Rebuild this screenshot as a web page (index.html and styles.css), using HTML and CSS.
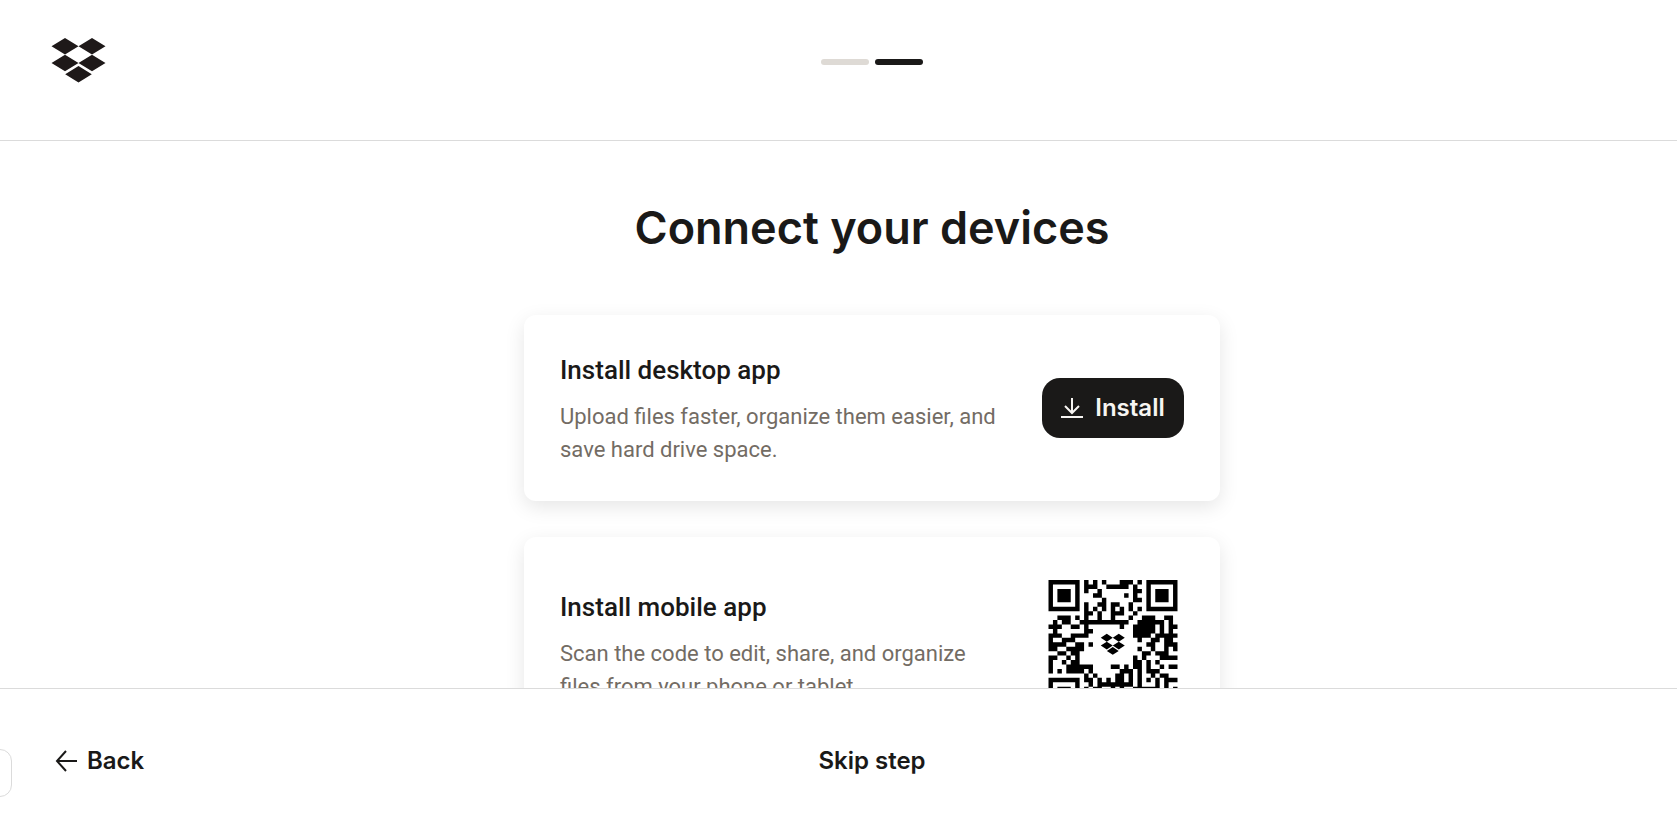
FILE: index.html
```html
<!DOCTYPE html>
<html lang="en">
    <head>
        <meta charset="utf-8">
        <title>Connect your devices</title>
        <meta name="viewport" content="width=device-width, initial-scale=1">
        <link rel="stylesheet" href="styles.css">
    </head>
    <body>
        <div class="page">
            <header class="top">
                <a class="logo" href="#" aria-label="Dropbox">
                    <svg viewBox="0 0 53 45">
                        <path id="glyph" d="M13 0l13.500 8.300-13.500 8.300L-.5 8.300zM40 0l13.500 8.300-13.500 8.300-13.500-8.300zM13 16.700l13.500 8.300-13.500 8.300L-.5 25zM40 16.700l13.500 8.300-13.500 8.300L26.500 25zM26.500 28l13.300 8.300-13.300 8.300-13.300-8.300z"/>
                    </svg>
                </a>
                <div class="steps">
                    <span class="step"></span>
                    <span class="step active"></span>
                </div>
            </header>

            <main class="content">
                <h1>Connect your devices</h1>
                <section class="card">
                    <div class="info">
                        <h2>Install desktop app</h2>
                        <p>Upload files faster, organize them easier, and save hard drive space.</p>
                    </div>
                    <button class="install" type="button">
                        <svg viewBox="0 0 22 22"><path d="M11 1v15M4 9l7 7 7-7M0 20h22"/></svg>
                        Install
                    </button>
                </section>
                <section class="card">
                    <div class="info">
                        <h2>Install mobile app</h2>
                        <p>Scan the code to edit, share, and organize files from your phone or tablet.</p>
                    </div>
                    <svg class="qr" viewBox="0 0 29 29" role="img" aria-label="QR code">
                        <path class="modules"/>
                        <use href="#glyph" transform="translate(11.8 12.1) scale(.1 .106)"/>
                    </svg>
                </section>
            </main>

            <footer class="bottom">
                <button class="link back" type="button">
                    <svg viewBox="0 0 22 22"><path d="M22 11H2M11 1L2 11l9 10"/></svg>
                    Back
                </button>
                <button class="link" type="button">Skip step</button>
            </footer>
        </div>
        <div class="tab"></div>
        <script src="qr.js"></script>
    </body>
</html>
```
FILE: styles.css
```css
* {
    box-sizing: border-box;
}

body {
    margin: 0;
    height: 100vh;
    overflow: hidden;
    color: #1a1918;
    background: #fff;
    font-family: Inter, "Liberation Sans", sans-serif;
}

/* wider than the window, runs out on the right */
.page {
    height: 100%;
    margin-right: -67px;
    display: flex;
    flex-direction: column;
}

.top,
.bottom {
    flex: none;
    display: grid;
    grid-template-columns: 1fr auto 1fr;
    padding: 0 52px;
}

.top {
    padding-top: 38px;
    padding-bottom: 57px;
    border-bottom: 1px solid #dbdbdb;
}

.logo svg {
    display: block;
    width: 53px;
    height: 45px;
    overflow: visible;
    fill: #1e1919;
}

.steps {
    display: flex;
    gap: 6px;
    padding-top: 21px;
}

.step {
    width: 48px;
    height: 6px;
    border-radius: 3px;
    background: #dedad5;
}

.step.active {
    background: #1a1918;
}

.content {
    flex: 1;
    min-height: 0;
    overflow: hidden;
    display: flex;
    flex-direction: column;
    align-items: center;
}

h1 {
    margin: 56px 0;
    font-size: 45px;
    line-height: 62px;
    font-weight: 600;
}

.card {
    flex: none;
    width: 100%;
    max-width: 696px;
    padding: 35px 36px;
    margin-bottom: 36px;
    display: flex;
    align-items: center;
    justify-content: space-between;
    gap: 36px;
    border-radius: 12px;
    box-shadow: 0 6px 20px rgba(0,0,0,.1);
}

.info {
    padding-top: 2px;
    font-family: Roboto, "Liberation Sans", sans-serif;
}

h2 {
    margin: 0 0 12px;
    font-size: 26px;
    line-height: 36px;
    font-weight: 500;
}

.info p {
    margin: 0;
    font-size: 22px;
    line-height: 33px;
    color: #736c64;
}

button {
    display: flex;
    align-items: center;
    border: 0;
    font-family: inherit;
    font-size: 24px;
    font-weight: 600;
    line-height: 28px;
    cursor: pointer;
}

button svg {
    flex: none;
    width: 22px;
    height: 22px;
    fill: none;
    stroke: currentColor;
    stroke-width: 2;
}

.install {
    flex: none;
    width: 142px;
    height: 60px;
    justify-content: center;
    gap: 12px;
    padding: 0;
    border-radius: 18px;
    color: #f7f5f2;
    background: #1a1918;
}

.qr {
    flex: none;
    width: 142px;
    height: 145px;
    padding: 8px 6px;
}

.bottom {
    padding-top: 48px;
    padding-bottom: 30px;
    border-top: 1px solid #dbdbdb;
}

.link {
    height: 48px;
    padding: 0;
    color: inherit;
    background: none;
}

.back {
    justify-self: start;
    gap: 10px;
    padding-left: 3px;
}

/* edge of the help tab */
.tab {
    position: absolute;
    left: -36px;
    bottom: 18px;
    width: 48px;
    height: 48px;
    border: 1px solid #dbdbdb;
    border-radius: 12px;
    background: #fff;
}
```
FILE: qr.js
```js
// one string per row, # is a dark module
const rows = [
    '#######.#.#.#...###.#.#######',
    '#.....#.###..#####.#..#.....#',
    '#.###.#.#..#.......##.#.###.#',
    '#.###.#...##.....#.#..#.###.#',
    '#.###.#.....#......##.#.###.#',
    '#.....#.#..##.##..#...#.....#',
    '#######.#.#.#.#.#.#.#.#######',
    '........##.#..###..#.........',
    '..###.#.#..#..#...#..###..##.',
    '.#.##..###########..######.#.',
    '###..##.#.......#..#####.#.##',
    '.#......##.........#####.#.#.',
    '###..####..........####.#####',
    '#..###..............#..##.##.',
    '####..##.#............##..###',
    '##..####............#..#..#.#',
    '..##.##..............##.###..',
    '##..#.#............#.#...####',
    '#..#.##............##.#.#....',
    '#...######....##.#.##.#..#.##',
    '#.#.####.#......###.#.###....',
    '........#.#....##.#.#..#.##..',
    '#######.##.#.#.##.#.#.#.#.###',
    '#.....#..#.########.#...#.#..',
    '#.###.#.#.##..#.#..######.#.#',
    '#.###.#.##..#.##..#..#.###..#',
    '#.###.#..#.##...##.#..#.##.#.',
    '#.....#.#..#.##.#..##.#..##.#',
    '#######.#.##..#.##..#.##.#..#'
];

let d = '';
rows.forEach((row, y) => {
    [...row].forEach((cell, x) => {
        if (cell === '#') d += `M${x} ${y}h1v1h-1z`;
    });
});
document.querySelector('.modules').setAttribute('d', d);
```
